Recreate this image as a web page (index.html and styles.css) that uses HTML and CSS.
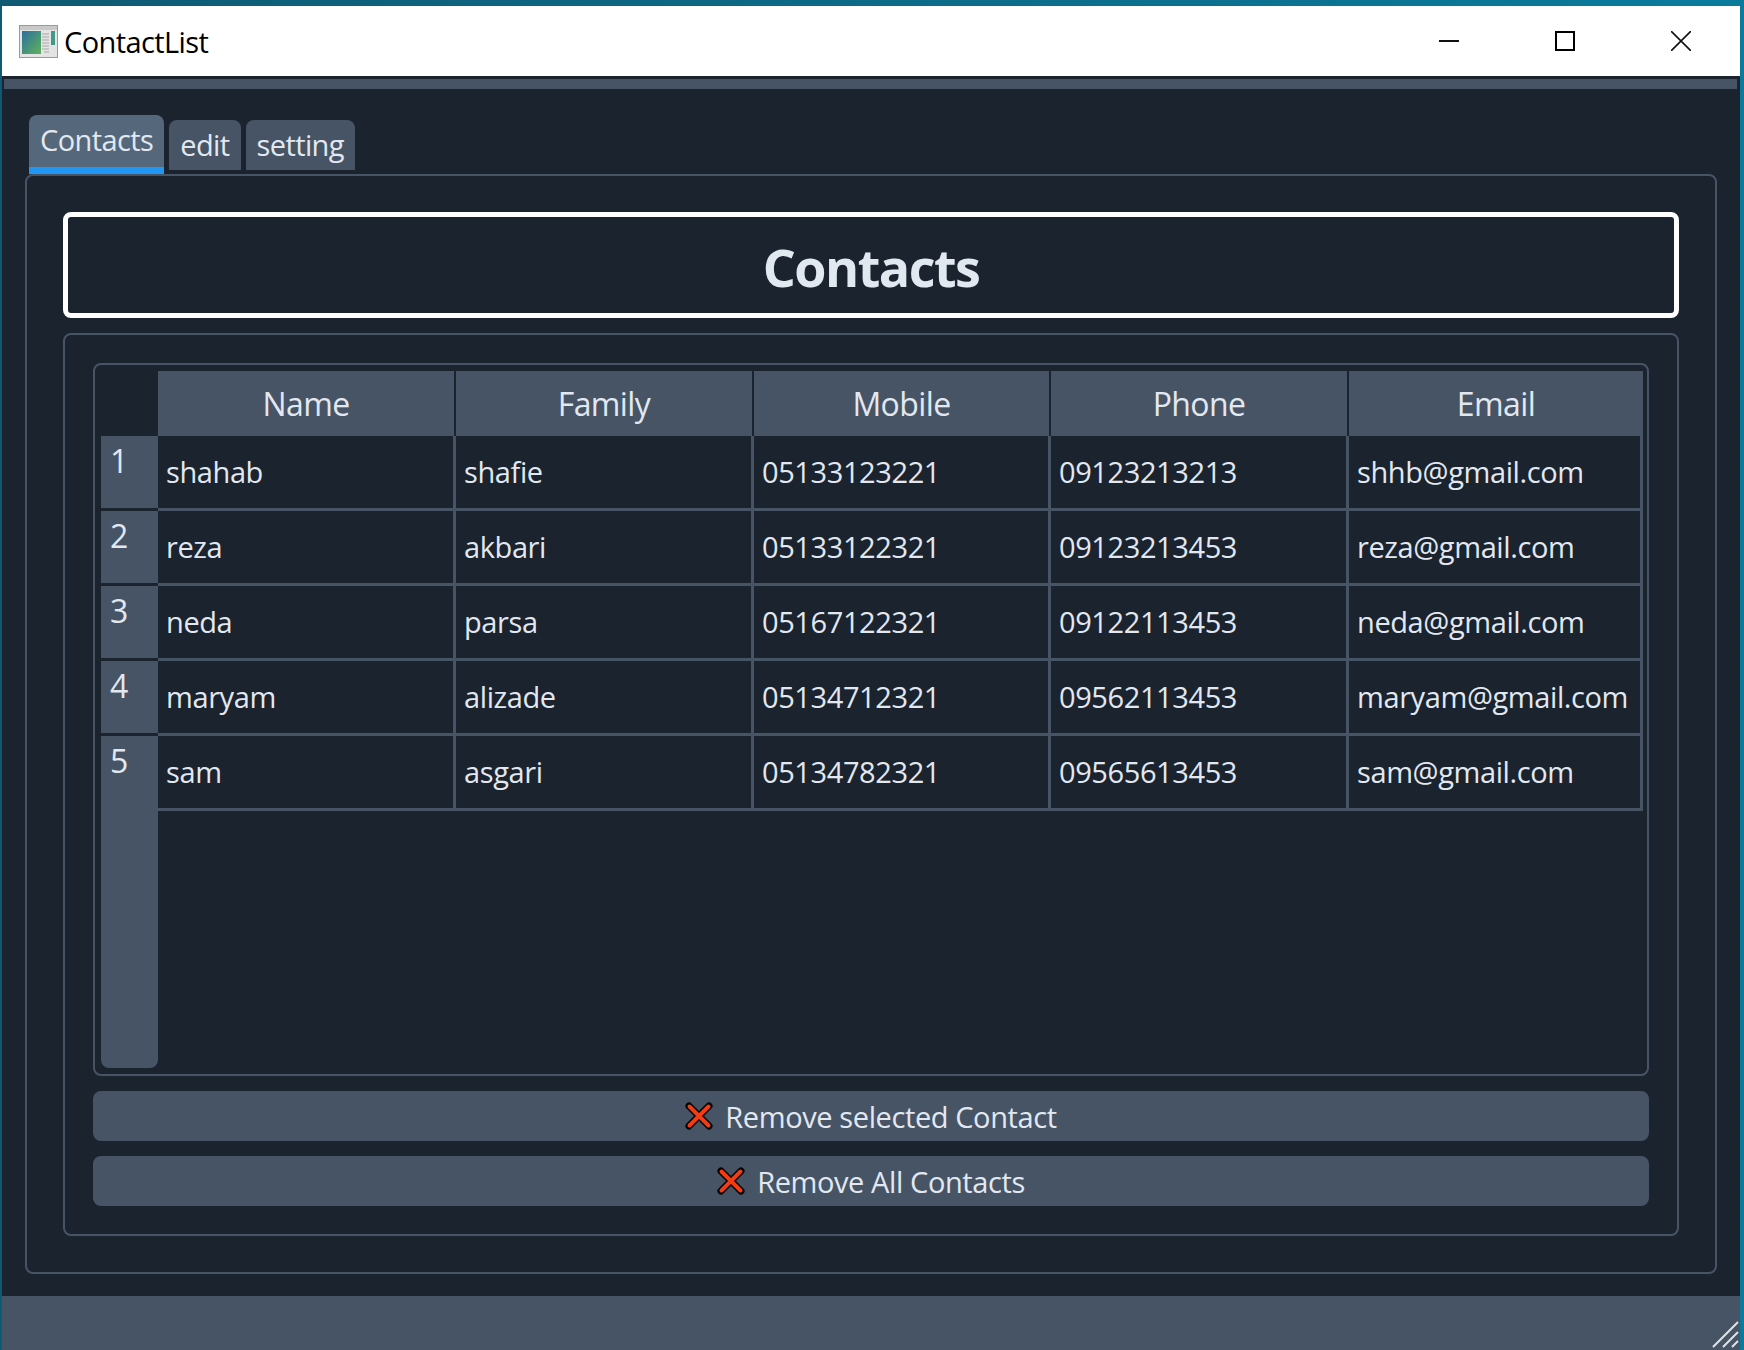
FILE: index.html
```html
<!DOCTYPE html>
<html lang="en">
<head>
  <meta charset="UTF-8">
  <meta name="viewport" content="width=device-width, initial-scale=1.0">
  <title>ContactList</title>
  <link rel="stylesheet" href="styles.css">
</head>
<body>
  <div class="window">
    <div class="titlebar">
      <svg class="app-icon" width="39" height="33" viewBox="0 0 39 33">
        <rect x="0.5" y="0.5" width="38" height="32" fill="#e4e4e4" stroke="#9a9a9a"/>
        <rect x="1" y="1" width="37" height="4" fill="#c9c9c9"/>
        <defs>
          <linearGradient id="pane" x1="0" y1="0" x2="1" y2="1">
            <stop offset="0" stop-color="#2c6f9e"/>
            <stop offset="1" stop-color="#5fb35a"/>
          </linearGradient>
        </defs>
        <rect x="3" y="6" width="19" height="23" fill="url(#pane)"/>
        <path d="M23 9h7M23 12h7M23 15h7M23 18h7M23 21h7M23 24h7M25 27h5" stroke="#a8a8a8" fill="none"/>
        <rect x="32" y="6" width="4" height="14" fill="#3f9a8a"/>
      </svg>
      <span class="app-name">ContactList</span>
      <div class="win-buttons">
        <svg width="20" height="20" viewBox="0 0 20 20"><path d="M0 10h20" stroke="#111" stroke-width="2"/></svg>
        <svg width="20" height="20" viewBox="0 0 20 20"><rect x="1" y="1" width="18" height="18" fill="none" stroke="#000" stroke-width="2"/></svg>
        <svg width="20" height="20" viewBox="0 0 20 20"><path d="M0 0L20 20M20 0L0 20" stroke="#111" stroke-width="1.6"/></svg>
      </div>
    </div>
    <div class="menubar"></div>

    <div class="main">
      <div class="tabs">
        <div class="tab active">Contacts</div>
        <div class="tab">edit</div>
        <div class="tab">setting</div>
      </div>
      <div class="tab-pane">
        <div class="heading">Contacts</div>
        <div class="group">
          <div class="table-frame">
            <div class="table">
              <div class="corner"></div>
              <div class="col-head">Name</div>
              <div class="col-head">Family</div>
              <div class="col-head">Mobile</div>
              <div class="col-head">Phone</div>
              <div class="col-head last">Email</div>

              <div class="row-head">1</div>
              <div class="cell">shahab</div>
              <div class="cell">shafie</div>
              <div class="cell">05133123221</div>
              <div class="cell">09123213213</div>
              <div class="cell">shhb@gmail.com</div>

              <div class="row-head">2</div>
              <div class="cell">reza</div>
              <div class="cell">akbari</div>
              <div class="cell">05133122321</div>
              <div class="cell">09123213453</div>
              <div class="cell">reza@gmail.com</div>

              <div class="row-head">3</div>
              <div class="cell">neda</div>
              <div class="cell">parsa</div>
              <div class="cell">05167122321</div>
              <div class="cell">09122113453</div>
              <div class="cell">neda@gmail.com</div>

              <div class="row-head">4</div>
              <div class="cell">maryam</div>
              <div class="cell">alizade</div>
              <div class="cell">05134712321</div>
              <div class="cell">09562113453</div>
              <div class="cell">maryam@gmail.com</div>

              <div class="row-head">5</div>
              <div class="cell">sam</div>
              <div class="cell">asgari</div>
              <div class="cell">05134782321</div>
              <div class="cell">09565613453</div>
              <div class="cell">sam@gmail.com</div>

              <div class="row-head rest"></div>
            </div>
          </div>
          <button class="btn">
            <svg width="28" height="28" viewBox="0 0 28 28"><path d="M4 4L24 24M24 4L4 24" stroke="#000" stroke-width="7" stroke-linecap="round"/><path d="M4.5 4.5L23.5 23.5M23.5 4.5L4.5 23.5" stroke="#f43c14" stroke-width="4" stroke-linecap="round"/></svg>
            Remove selected Contact
          </button>
          <button class="btn">
            <svg width="28" height="28" viewBox="0 0 28 28"><path d="M4 4L24 24M24 4L4 24" stroke="#000" stroke-width="7" stroke-linecap="round"/><path d="M4.5 4.5L23.5 23.5M23.5 4.5L4.5 23.5" stroke="#f43c14" stroke-width="4" stroke-linecap="round"/></svg>
            Remove All Contacts
          </button>
        </div>
      </div>
    </div>

    <div class="statusbar">
      <svg class="grip" width="28" height="28" viewBox="0 0 28 28"><path d="M2 26L27 1M12 26L27 11M21 26L27 20" stroke="#dfe3e8" stroke-width="2"/></svg>
    </div>
  </div>
</body>
</html>
```

FILE: styles.css
```css
html, body {
  margin: 0;
  height: 100%;
}
body {
  font-family: "Open Sans", "Noto Sans", sans-serif;
  background: linear-gradient(90deg, #0f5a72, #0a7b9c);
  overflow: hidden;
}
.window {
  margin: 6px 4px 0 2px;
  height: 1344px;
  display: flex;
  flex-direction: column;
  background: #1a232e;
}
.titlebar {
  height: 70px;
  flex: none;
  background: white;
  display: flex;
  align-items: center;
  padding-left: 17px;
  color: #000;
  font-size: 29px;
}
.app-icon {
  margin-right: 6px;
}
.app-name {
  letter-spacing: -0.6px;
}
.win-buttons {
  margin-left: auto;
  display: flex;
  gap: 96px;
  padding-right: 49px;
}
.win-buttons svg {
  display: block;
}
.menubar {
  flex: none;
  height: 10px;
  margin: 3px 3px 0 2px;
  background: #475466;
}
.main {
  flex: 1;
  padding: 25px 23px 22px 23px;
  display: flex;
  flex-direction: column;
}
.tabs {
  display: flex;
  align-items: flex-end;
  gap: 5px;
  height: 60px;
  padding-left: 4px;
  flex: none;
}
.tab {
  background: #475466;
  color: #e2e8f0;
  font-size: 29px;
  height: 50px;
  line-height: 50px;
  padding: 0 11px;
  border-radius: 8px 8px 0 0;
  margin-bottom: 4px;
  letter-spacing: -0.6px;
}
.tab.active {
  background: #55677a;
  height: 52px;
  line-height: 50px;
  border-bottom: 7px solid #2196f3;
  margin-bottom: 0;
}
.tab-pane {
  flex: 1;
  border: 2px solid #475466;
  border-radius: 8px;
  padding: 36px;
  display: flex;
  flex-direction: column;
  gap: 15px;
}
.heading {
  flex: none;
  height: 96px;
  border: 5px solid white;
  border-radius: 8px;
  color: #e2e8f0;
  font-size: 52px;
  font-weight: 700;
  text-align: center;
  line-height: 100px;
  letter-spacing: -1.5px;
}
.group {
  flex: 1;
  border: 2px solid #475466;
  border-radius: 8px;
  padding: 28px 28px 28px 28px;
  display: flex;
  flex-direction: column;
}
.table-frame {
  flex: 1;
  border: 2px solid #475466;
  border-radius: 8px;
  padding: 6px 6px 6px 6px;
  display: flex;
  margin-bottom: 15px;
}
.table {
  flex: 1;
  display: grid;
  grid-template-columns: 57px 298px 298px 297px 298px 294px;
  grid-template-rows: 65px repeat(5, 75px) 1fr;
  color: #e2e8f0;
}
.col-head {
  background: #475466;
  font-size: 32px;
  line-height: 65px;
  text-align: center;
  margin-right: 2px;
  letter-spacing: -0.6px;
}
.col-head.last {
  margin-right: 0;
}
.row-head {
  background: #475466;
  font-size: 32px;
  line-height: 50px;
  padding-left: 9px;
  border-bottom: 3px solid #1a232e;
  box-sizing: border-box;
}
.row-head.rest {
  grid-column: 1;
  border-bottom: 0;
  border-radius: 0 0 8px 8px;
  margin-top: -3px;
}
.cell {
  font-size: 29px;
  line-height: 72px;
  padding: 0 0 0 8px;
  margin-right: 0;
  border-right: 3px solid #475466;
  border-bottom: 3px solid #475466;
  box-sizing: border-box;
  white-space: nowrap;
  letter-spacing: -0.4px;
}
.btn {
  flex: none;
  height: 50px;
  margin-bottom: 15px;
  border: none;
  border-radius: 8px;
  background: #475466;
  color: #e2e8f0;
  font: inherit;
  font-size: 29px;
  letter-spacing: -0.4px;
  display: flex;
  align-items: center;
  justify-content: center;
  gap: 12px;
}
.btn:last-child {
  margin-bottom: 0;
}
.statusbar {
  flex: none;
  height: 54px;
  background: #475466;
  position: relative;
}
.grip {
  position: absolute;
  right: 1px;
  bottom: 1px;
}
```
